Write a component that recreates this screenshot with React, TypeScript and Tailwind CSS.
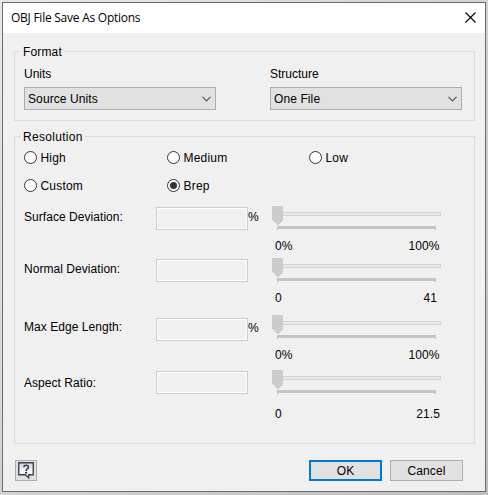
const sliders = [
  { label: 'Surface Deviation:', unit: '%', min: '0%', max: '100%', row: 'h-[52px]', name: 'pt-1', field: 'mt-px', pct: 'mt-[3px]', scale: 'mt-[3px] w-[167.5px]' },
  { label: 'Normal Deviation:', unit: '', min: '0', max: '41', row: 'h-[57px]', name: 'pt-1', field: 'mt-px', pct: 'mt-[3px]', scale: 'mt-[3px] w-[165px]' },
  { label: 'Max Edge Length:', unit: '%', min: '0%', max: '100%', row: 'h-[55px]', name: 'pt-[5px]', field: 'mt-[3px]', pct: 'mt-[5px]', scale: 'mt-[3px] w-[167.5px]' },
  { label: 'Aspect Ratio:', unit: '', min: '0', max: '21.5', row: 'h-[55px]', name: 'pt-[6px]', field: 'mt-px', pct: 'mt-[3px]', scale: 'mt-[7px] w-[168px]' },
]

function Select({ label, value }: { label: string; value: string }) {
  return (
    <div className="w-48">
      <div className="h-[14px] leading-[14px]">{label}</div>
      <button className="mt-[6px] flex h-[23px] w-full items-center justify-between border border-[#adadad] bg-[#e1e1e1] pr-1 pl-[3px] leading-[14px]">
        <span className="tracking-[0.1px]">{value}</span>
        <svg width="9" height="6" viewBox="0 0 9 6" fill="none" stroke="#555" strokeWidth="1.1">
          <path d="M.5 .9 4.5 4.9 8.5 .9" />
        </svg>
      </button>
    </div>
  )
}

function Radio({ label, checked = false }: { label: string; checked?: boolean }) {
  return (
    <label className="flex h-[13px] items-center">
      <svg width="13" height="13" viewBox="0 0 13 13">
        <circle cx="6.5" cy="6.5" r="6" fill="#fff" stroke="#333" />
        {checked && <circle cx="6.5" cy="6.5" r="3.5" fill="#333" />}
      </svg>
      <span className="ml-[3.5px] leading-[14px] tracking-[0.2px]">{label}</span>
    </label>
  )
}

function Slider({ min, max, scale }: { min: string; max: string; scale: string }) {
  return (
    <div className="w-[169px]">
      <svg width="169" height="24" viewBox="0 0 169 24" shapeRendering="crispEdges" className="block">
        <rect x=".5" y="6.5" width="168" height="3" fill="#e7eaea" stroke="#d4d7d6" />
        <path d="M0 0h11v14l-5 5h-1l-5-5z" fill="#ccc" />
        <path d="M5 20h159v4h-1v-1H6v1H5z" fill="#c4c4c4" />
      </svg>
      <div className={`flex justify-between pl-[3px] tracking-[0.1px] ${scale}`}>
        <span>{min}</span>
        <span>{max}</span>
      </div>
    </div>
  )
}

export default function App() {
  return (
    <div className="h-[495px] w-[488px] bg-linear-to-br from-[#e8e8e8] to-[#bdbdbd] p-[2px] font-['Liberation_Sans',Arial,sans-serif] text-[12px] leading-[26px] text-black">
      <div className="flex h-[490px] w-[484px] flex-col border border-[#6b6b6b] bg-[#f0f0f0]">
        {/* Title bar */}
        <div className="flex h-[30px] items-center justify-between bg-white pr-[9px] pl-2">
          <span className="font-['Open_Sans',sans-serif] text-[12px] tracking-[-0.25px]">OBJ File Save As Options</span>
          <svg width="11" height="11" viewBox="0 0 11 11" stroke="#000" strokeWidth="1.1" className="-mt-[2px]">
            <path d="M.5 .5 10.5 10.5M10.5 .5 .5 10.5" />
          </svg>
        </div>

        {/* Format */}
        <div className="mt-[18px] ml-[11px] h-[70px] w-[461px] border border-[#dcdcdc]">
          <div className="-mt-[7px] ml-[6px] w-fit bg-[#f0f0f0] px-[2px] leading-[14px] tracking-[0.15px]">Format</div>
          <div className="mt-2 flex gap-[54px] pl-[9px]">
            <Select label="Units" value="Source Units" />
            <Select label="Structure" value="One File" />
          </div>
        </div>

        {/* Resolution */}
        <div className="mt-[15px] ml-[11px] h-[308px] w-[461px] border border-[#dcdcdc]">
          <div className="-mt-[7px] ml-[6px] w-fit bg-[#f0f0f0] px-[2px] leading-[14px] tracking-[0.3px]">Resolution</div>
          <div className="mt-[7px] grid grid-cols-[143px_142px_100px] gap-y-[15px] pl-[9px]">
            <Radio label="High" />
            <Radio label="Medium" />
            <Radio label="Low" />
            <Radio label="Custom" />
            <Radio label="Brep" checked />
          </div>
          <div className="mt-[14px] pl-[9px]">
            {sliders.map((s) => (
              <div key={s.label} className={`flex items-start ${s.row}`}>
                <div className={`w-[132px] leading-[14px] tracking-[0.05px] ${s.name}`}>{s.label}</div>
                <div className={`h-[23px] w-[92px] border border-[#ccc] p-px ${s.field}`}>
                  <div className="h-full outline-1 outline-white" />
                </div>
                <div className={`w-6 leading-[14px] ${s.pct}`}>{s.unit && <span className="block pt-px">{s.unit}</span>}</div>
                <Slider min={s.min} max={s.max} scale={s.scale} />
              </div>
            ))}
          </div>
        </div>

        {/* Footer */}
        <div className="mt-4 flex pl-3 leading-[14px]">
          <button className="flex h-[21px] w-[22px] items-start border border-[#adadad] bg-[#e1e1e1] pt-px pl-[2px]">
            <svg width="16" height="17" viewBox="0 0 16 17">
              <defs>
                <linearGradient id="bubble" x1="0" y1="0" x2="0" y2="1">
                  <stop offset="0" stopColor="#cfd5df" />
                  <stop offset=".7" stopColor="#fff" />
                </linearGradient>
              </defs>
              <path d="M.75 .75h14.5v12H10.7v3l-3.3-3H.75z" fill="url(#bubble)" stroke="#3b4453" strokeWidth="1.4" />
              <path d="M6 5.2V4.5Q6 3.2 8.2 3.2T10.4 5.1Q10.4 6.2 9.2 6.9T8.2 9" fill="none" stroke="#333b49" strokeWidth="1.6" />
              <rect x="7.2" y="9.8" width="2" height="1.8" fill="#222b3a" />
            </svg>
          </button>
          <button className="ml-[272px] h-[21px] w-[73px] border-2 border-[#0078d7] bg-[#e1e1e1]">OK</button>
          <button className="ml-2 h-[21px] w-[73px] border border-[#adadad] bg-[#e1e1e1] tracking-[0.1px]">Cancel</button>
        </div>
      </div>
    </div>
  )
}
